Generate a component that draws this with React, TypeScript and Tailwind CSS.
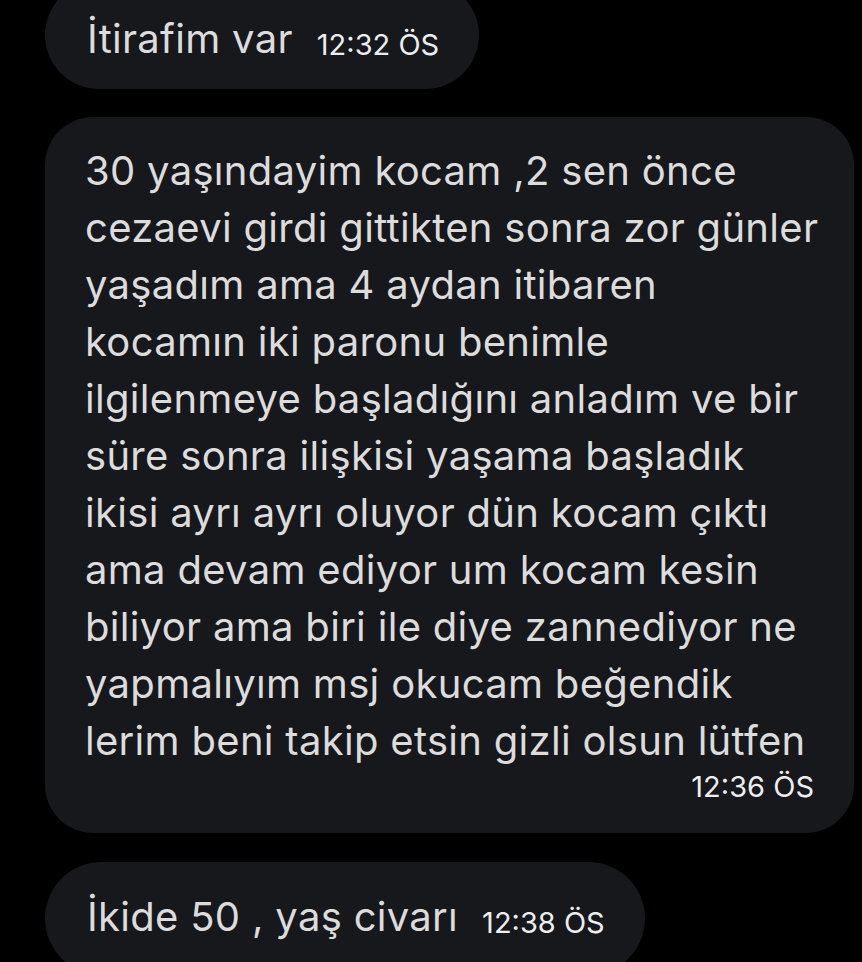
const lines = [
  '30 yaşındayim kocam ,2 sen önce',
  'cezaevi girdi gittikten sonra zor günler',
  'yaşadım ama 4 aydan itibaren',
  'kocamın iki paronu benimle',
  'ilgilenmeye başladığını anladım ve bir',
  'süre sonra ilişkisi yaşama başladık',
  'ikisi ayrı ayrı oluyor dün kocam çıktı',
  'ama devam ediyor um kocam kesin',
  'biliyor ama biri ile diye zannediyor ne',
  'yapmalıyım msj okucam beğendik',
  'lerim beni takip etsin gizli olsun lütfen',
]

function Time({ children }: { children: string }) {
  return (
    <span className="text-[29px] leading-[36px] text-[#eceeef] font-['Inter','Roboto',sans-serif] whitespace-nowrap">
      {children}
    </span>
  )
}

function ShortBubble({ text, time, className = '' }: { text: string; time: string; className?: string }) {
  return (
    <div className={`flex items-end gap-[24px] bg-[#16181c] rounded-full pl-[42px] pr-[40px] ${className}`}>
      <span className="text-[40px] leading-[57px] tracking-[0.3px] text-[#dcdcdc] whitespace-nowrap">{text}</span>
      <span className="mb-[4px]">
        <Time>{time}</Time>
      </span>
    </div>
  )
}

export default function App() {
  return (
    <div className="h-[962px] overflow-hidden bg-black font-['Inter','Roboto',sans-serif]">
      <div className="flex flex-col items-start pl-[45px] -mt-[19px]">
        {/* ilk mesaj, üstü kesik */}
        <ShortBubble text="İtirafim var" time="12:32 ÖS" className="pt-[29px] pb-[22px]" />

        {/* uzun mesaj */}
        <div className="mt-[28px] w-[809px] bg-[#16181c] rounded-[48px] pl-[40px] pr-[40px] pt-[25px] pb-[28px]">
          <div className="text-[40px] leading-[57px] tracking-[0.3px] text-[#dcdcdc]">
            {lines.map((l) => (
              <div key={l} className="whitespace-nowrap">
                {l}
              </div>
            ))}
          </div>
          <div className="flex justify-end">
            <Time>12:36 ÖS</Time>
          </div>
        </div>

        <ShortBubble text="İkide 50 , yaş civarı" time="12:38 ÖS" className="mt-[29px] pt-[26px] pb-[30px]" />
      </div>
    </div>
  )
}
